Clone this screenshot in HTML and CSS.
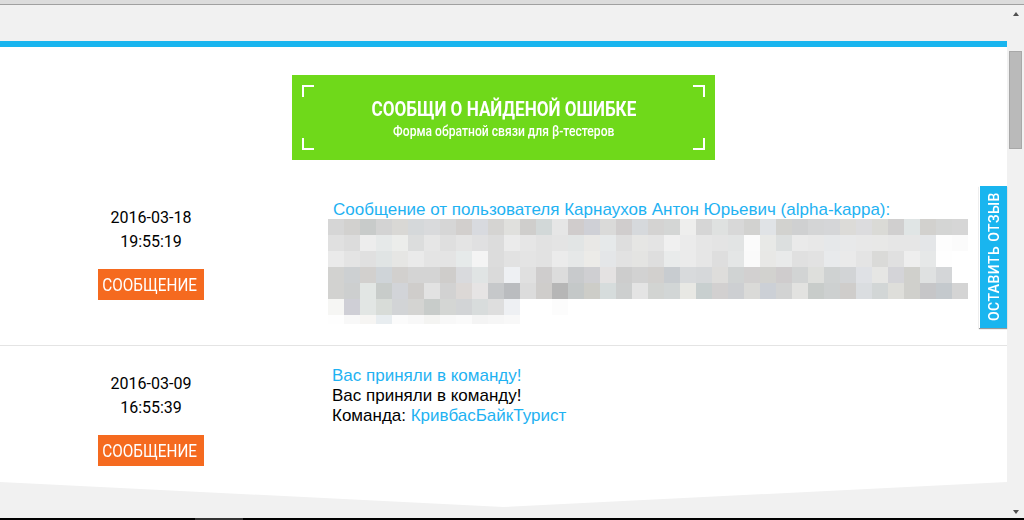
FILE: index.html
```html
<!DOCTYPE html>
<html lang="ru">
<head>
<meta charset="utf-8">
<title>Сообщения</title>
<link rel="stylesheet" href="styles.css">
</head>
<body>
<div class="topstrip"></div>
<div class="window">
  <main class="page">
    <div class="bluebar"></div>
    <div class="sheet">
      <a class="banner">
        <span class="corner tl"></span><span class="corner tr"></span><span class="corner bl"></span><span class="corner br"></span>
        <span class="banner-title">СООБЩИ О НАЙДЕНОЙ ОШИБКЕ</span>
        <span class="banner-sub">Форма обратной связи для β-тестеров</span>
      </a>
      <section class="row first">
        <div class="meta">
          <div class="date">2016-03-18<br>19:55:19</div>
          <a class="btn"><span>СООБЩЕНИЕ</span></a>
        </div>
        <div class="body">
          <a class="link">Сообщение от пользователя Карнаухов Антон Юрьевич (alpha-kappa):</a>
          <div class="mosaic">
<i style="background:#d6d6d6"></i><i style="background:#d2d1cf"></i><i style="background:#c8cbca"></i><i style="background:#d3d3d3"></i><i style="background:#d9d8d5"></i><i style="background:#d5d8da"></i><i style="background:#d9dadc"></i><i style="background:#d6d6d6"></i><i style="background:#d2cfcd"></i><i style="background:#d8dadf"></i><i style="background:#d5d4d2"></i><i style="background:#e0e0dd"></i><i style="background:#cfcecc"></i><i style="background:#d2d8d8"></i><i style="background:#e6e6e6"></i><i style="background:#d0cccc"></i><i style="background:#cfd0d6"></i><i style="background:#dadad9"></i><i style="background:#d0cdcd"></i><i style="background:#d6d9dc"></i><i style="background:#d4d3d2"></i><i style="background:#d4d6d5"></i><i style="background:#eeeeed"></i><i style="background:#d6d6d6"></i><i style="background:#dfe1e0"></i><i style="background:#d8d8d8"></i><i style="background:#d2d2d0"></i><i style="background:#e0e3e6"></i><i style="background:#d2d2cf"></i><i style="background:#cfd0d1"></i><i style="background:#d4d5d6"></i><i style="background:#d5d6d8"></i><i style="background:#dcdbd8"></i><i style="background:#dcdcde"></i><i style="background:#dadad6"></i><i style="background:#d0cfcf"></i><i style="background:#e0e5e5"></i><i style="background:#d2d1ce"></i><i style="background:#d4d5d4"></i><i style="background:#d6d6d6"></i>
<i style="background:#e0e0e0"></i><i style="background:#dcdcdc"></i><i style="background:#ededed"></i><i style="background:#e6e9e9"></i><i style="background:#ecedeb"></i><i style="background:#dcdddd"></i><i style="background:#e6e6e6"></i><i style="background:#dfdfdf"></i><i style="background:#e4e4e4"></i><i style="background:#e0e0e1"></i><i style="background:#dcdcdc"></i><i style="background:#ebebeb"></i><i style="background:#e6e6e6"></i><i style="background:#e2e2e2"></i><i style="background:#e4e4e4"></i><i style="background:#e2e5e5"></i><i style="background:#e9e8e6"></i><i style="background:#e6e9ea"></i><i style="background:#dedede"></i><i style="background:#e6e6e4"></i><i style="background:#e4e4e4"></i><i style="background:#f0f0f0"></i><i style="background:#ebebeb"></i><i style="background:#e6e6e6"></i><i style="background:#e4e4e4"></i><i style="background:#e2e4e4"></i><i style="background:#fbfbfb"></i><i style="background:#e8e9e7"></i><i style="background:#dcdfdf"></i><i style="background:#eaeaea"></i><i style="background:#e8e8e8"></i><i style="background:#e6e8ea"></i><i style="background:#e8e9ea"></i><i style="background:#e8e8e8"></i><i style="background:#e8e8e7"></i><i style="background:#e6e6e6"></i><i style="background:#e6e6e6"></i><i style="background:#e4e6e8"></i><i style="background:#fdfdfd"></i><i style="background:#fbfbfb"></i>
<i style="background:#eaeaea"></i><i style="background:#e4e4e4"></i><i style="background:#e0e0e0"></i><i style="background:#e0e4e4"></i><i style="background:#e6e6e4"></i><i style="background:#eaeaea"></i><i style="background:#e4e4e4"></i><i style="background:#e4e4e4"></i><i style="background:#e6eaea"></i><i style="background:#f4f4f4"></i><i style="background:#dcdcdc"></i><i style="background:#e2e2e2"></i><i style="background:#e4e4e4"></i><i style="background:#e2e2e2"></i><i style="background:#ebebeb"></i><i style="background:#e6e8e8"></i><i style="background:#ecebe8"></i><i style="background:#e4e6e8"></i><i style="background:#e2e2e2"></i><i style="background:#e4e4e2"></i><i style="background:#dedede"></i><i style="background:#e9ebeb"></i><i style="background:#ebebeb"></i><i style="background:#e6e6e6"></i><i style="background:#dedede"></i><i style="background:#e4e6e6"></i><i style="background:#fafafa"></i><i style="background:#e8e8e6"></i><i style="background:#e9eaea"></i><i style="background:#e0e0e0"></i><i style="background:#e2e2e2"></i><i style="background:#e8eaec"></i><i style="background:#eaeaea"></i><i style="background:#e4e4e4"></i><i style="background:#dadad8"></i><i style="background:#e0e0e0"></i><i style="background:#eeeeee"></i><i style="background:#e6e8e8"></i><i style="background:#fefefe"></i><i style="background:#ffffff"></i>
<i style="background:#d2d2d0"></i><i style="background:#cdd0d2"></i><i style="background:#d2d0ce"></i><i style="background:#cfd4d8"></i><i style="background:#d2d0ce"></i><i style="background:#d4d4d4"></i><i style="background:#d4d4d4"></i><i style="background:#cfcdcb"></i><i style="background:#d9dadd"></i><i style="background:#e0e4e4"></i><i style="background:#dadada"></i><i style="background:#eef0f3"></i><i style="background:#e0e0e0"></i><i style="background:#cfcdcd"></i><i style="background:#dcdcdc"></i><i style="background:#c8cacc"></i><i style="background:#cfcfd2"></i><i style="background:#e4e2e2"></i><i style="background:#cdcdcd"></i><i style="background:#d2d2d2"></i><i style="background:#d2d0ce"></i><i style="background:#c8ccd0"></i><i style="background:#d8dadc"></i><i style="background:#d6d8da"></i><i style="background:#dedddb"></i><i style="background:#d0d3d3"></i><i style="background:#d2d0d0"></i><i style="background:#d2d2cf"></i><i style="background:#cfcccd"></i><i style="background:#d2d4d4"></i><i style="background:#dedfdc"></i><i style="background:#cfd2d2"></i><i style="background:#d2d4d6"></i><i style="background:#dfe1e5"></i><i style="background:#e6e6e4"></i><i style="background:#d4d4d8"></i><i style="background:#d0d0cc"></i><i style="background:#dfe1e1"></i><i style="background:#d4d6d8"></i><i style="background:#ffffff"></i>
<i style="background:#d2d2d0"></i><i style="background:#cdcfcf"></i><i style="background:#e2e6e4"></i><i style="background:#c8ccca"></i><i style="background:#d2d4d8"></i><i style="background:#cfcdcb"></i><i style="background:#e2e2e2"></i><i style="background:#d2d2d2"></i><i style="background:#dcd8d6"></i><i style="background:#e6e4e4"></i><i style="background:#c6c8ca"></i><i style="background:#babcbf"></i><i style="background:#dcdcdc"></i><i style="background:#cfcdcb"></i><i style="background:#b6b6b6"></i><i style="background:#c4c8c8"></i><i style="background:#cdcdc8"></i><i style="background:#d6dcdc"></i><i style="background:#cdcfcf"></i><i style="background:#e4e4e4"></i><i style="background:#d2d4d2"></i><i style="background:#d2d6d6"></i><i style="background:#e8e8e4"></i><i style="background:#c8cfcf"></i><i style="background:#d2d0d0"></i><i style="background:#cdcfd2"></i><i style="background:#dadad8"></i><i style="background:#ccd0d6"></i><i style="background:#d2d3d3"></i><i style="background:#e2e2e0"></i><i style="background:#c8ccca"></i><i style="background:#cdd0d0"></i><i style="background:#cfcdcb"></i><i style="background:#dadde0"></i><i style="background:#d2d6d6"></i><i style="background:#dededa"></i><i style="background:#d0d0cc"></i><i style="background:#c6c6c8"></i><i style="background:#c4c9cd"></i><i style="background:#d4d4d4"></i>
<i style="background:#f6f6f4"></i><i style="background:#cfcfd6"></i><i style="background:#e2e6e4"></i><i style="background:#d8dcd8"></i><i style="background:#d2d4d6"></i><i style="background:#d4d4d2"></i><i style="background:#c8ccca"></i><i style="background:#d4d6d4"></i><i style="background:#d2d4d6"></i><i style="background:#d8dcdc"></i><i style="background:#dedede"></i><i style="background:#eef0f3"></i><i></i><i></i><i style="background:#fcfcfc"></i>
          </div>
          <div class="mosaic tail">
<i style="background:#fefefe"></i><i style="background:#f8f8f8"></i><i style="background:#f6f5f3"></i><i style="background:#e8edf0"></i><i style="background:#fbfbfb"></i><i style="background:#f8f8f8"></i><i style="background:#f4f4f2"></i><i style="background:#f8f8f8"></i><i style="background:#fafafa"></i><i style="background:#f4f4f4"></i><i style="background:#f6f6f6"></i><i style="background:#f8f8f8"></i>
          </div>
        </div>
      </section>
      <section class="row second">
        <div class="meta">
          <div class="date">2016-03-09<br>16:55:39</div>
          <a class="btn"><span>СООБЩЕНИЕ</span></a>
        </div>
        <div class="body">
          <a class="link">Вас приняли в команду!</a>
          <div>Вас приняли в команду!</div>
          <div>Команда: <a class="link">КривбасБайкТурист</a></div>
        </div>
      </section>
    </div>
  </main>
  <aside class="scrollbar">
    <span class="arrow up"></span>
    <span class="thumb"></span>
    <span class="arrow down"></span>
  </aside>
  <a class="feedback">ОСТАВИТЬ ОТЗЫВ</a>
</div>
<div class="taskbar"><span class="taskbar-seg"></span></div>
</body>
</html>
```
FILE: styles.css
```css
* { box-sizing: border-box; }
html, body { margin: 0; height: 520px; overflow: hidden; }
body {
  display: flex;
  flex-direction: column;
  background: #f1f1f1;
  font-family: "Liberation Sans", Arial, sans-serif;
  font-size: 17px;
  line-height: 20px;
  color: #000;
}
.topstrip {
  height: 5px;
  background: #dcdcdc;
  border-bottom: 1px solid #a0a0a0;
  flex: none;
}
.window {
  position: relative;
  flex: 1;
  display: flex;
  min-height: 0;
}
.page {
  width: 1007px;
  flex: none;
  padding-top: 36px;
}
.bluebar { height: 6px; background: #19b5ef; }
.sheet {
  height: 460px;
  background: #fff;
  padding-top: 28px;
  clip-path: polygon(0 0, 100% 0, 100% 435px, 50% 100%, 0 435px);
}
.banner {
  position: relative;
  display: flex;
  flex-direction: column;
  align-items: center;
  width: 423px;
  height: 85px;
  margin-left: 292px;
  padding-top: 22px;
  background: #6fd91a;
  color: #fff;
  font-family: Roboto, sans-serif;
}
.banner-title {
  font-size: 20px;
  line-height: 24px;
  font-weight: 700;
  white-space: nowrap;
  transform: scaleX(.855);
}
.banner-sub {
  font-size: 14px;
  line-height: 18px;
  margin-top: 1px;
  font-weight: 500;
  white-space: nowrap;
  transform: scaleX(.866);
}
.corner {
  position: absolute;
  width: 12px;
  height: 12px;
  border: 0 solid #fff;
}
.tl { left: 10px; top: 10px; border-width: 2px 0 0 2px; }
.tr { right: 10px; top: 10px; border-width: 2px 2px 0 0; }
.bl { left: 10px; bottom: 10px; border-width: 0 0 2px 2px; }
.br { right: 10px; bottom: 10px; border-width: 0 2px 2px 0; }

.row {
  display: flex;
}
.row.first {
  height: 186px;
  padding-top: 46px;
  border-bottom: 1px solid #e4e4e4;
}
.row.second {
  height: 161px;
  padding-top: 26px;
}
.meta {
  width: 302px;
  flex: none;
  display: flex;
  flex-direction: column;
  align-items: center;
  font-family: Roboto, sans-serif;
}
.date {
  font-size: 16px;
  line-height: 24px;
  text-align: center;
}
.btn {
  display: flex;
  align-items: center;
  justify-content: center;
  width: 106px;
  height: 31px;
  margin-top: 15px;
  padding: 1px 2px 0 0;
  background: #f56a1f;
  color: #fff;
  font-size: 18px;
  white-space: nowrap;
}
.btn span { display: block; transform: scaleX(.85); }
.body { width: 640px; margin-left: 26px; }
.first .body > .link {
  display: block;
  padding-left: 5px;
  margin-top: -6px;
  height: 19px;
  white-space: nowrap;
}
.second .body { padding-left: 4px; margin-top: -6px; }
.link { color: #1fb2f2; }
.mosaic {
  display: grid;
  grid-template-columns: repeat(40, 16px);
  grid-auto-rows: 16px;
  filter: blur(.5px);
}
.mosaic i { display: block; }
.mosaic.tail { grid-auto-rows: 9px; }

.scrollbar {
  width: 17px;
  flex: none;
  height: 511px;
  position: relative;
  display: flex;
  flex-direction: column;
  align-items: center;
  padding-top: 7px;
}
.arrow {
  width: 0;
  height: 0;
  border-left: 3.5px solid transparent;
  border-right: 3.5px solid transparent;
  flex: none;
}
.arrow.up { border-bottom: 4px solid #505050; }
.arrow.down { border-top: 4px solid #505050; margin-top: auto; margin-bottom: 2px; }
.thumb {
  width: 13px;
  height: 98px;
  margin-top: 35px;
  background: #bababa;
  border: 1px solid #a8a8a8;
  flex: none;
}
.feedback {
  position: absolute;
  left: 979px;
  top: 181px;
  width: 28px;
  height: 142px;
  display: flex;
  align-items: center;
  justify-content: center;
  background: #19b5ef;
  border-right: 1px solid #fff;
  box-shadow: 0 -1px 1px #999;
  color: #fff;
  font-family: Roboto, sans-serif;
  font-size: 14px;
  font-weight: 500;
  letter-spacing: .45px;
  writing-mode: vertical-rl;
  transform: rotate(180deg);
  white-space: nowrap;
}
.taskbar {
  height: 2px;
  flex: none;
  background: #000;
  padding-left: 195px;
}
.taskbar-seg { display: block; width: 48px; height: 2px; background: #333; }
```
